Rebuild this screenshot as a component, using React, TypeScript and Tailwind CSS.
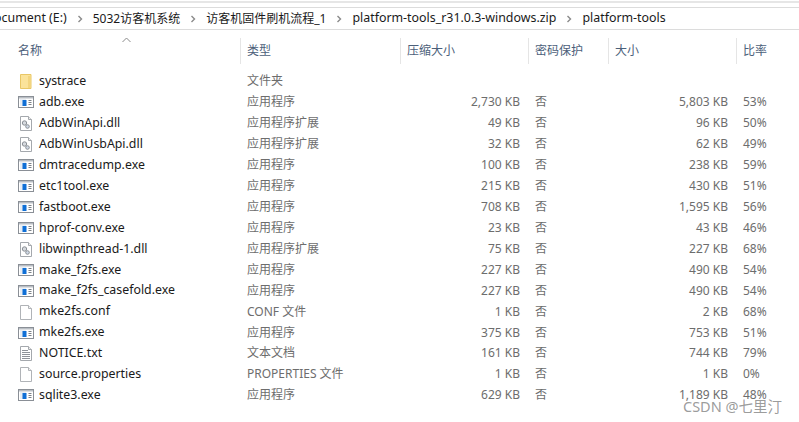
const rows: [string, string, string, string, string, string, string][] = [
  ["folder", "systrace", "文件夹", "", "", "", ""],
  ["exe", "adb.exe", "应用程序", "2,730 KB", "否", "5,803 KB", "53%"],
  ["dll", "AdbWinApi.dll", "应用程序扩展", "49 KB", "否", "96 KB", "50%"],
  ["dll", "AdbWinUsbApi.dll", "应用程序扩展", "32 KB", "否", "62 KB", "49%"],
  ["exe", "dmtracedump.exe", "应用程序", "100 KB", "否", "238 KB", "59%"],
  ["exe", "etc1tool.exe", "应用程序", "215 KB", "否", "430 KB", "51%"],
  ["exe", "fastboot.exe", "应用程序", "708 KB", "否", "1,595 KB", "56%"],
  ["exe", "hprof-conv.exe", "应用程序", "23 KB", "否", "43 KB", "46%"],
  ["dll", "libwinpthread-1.dll", "应用程序扩展", "75 KB", "否", "227 KB", "68%"],
  ["exe", "make_f2fs.exe", "应用程序", "227 KB", "否", "490 KB", "54%"],
  ["exe", "make_f2fs_casefold.exe", "应用程序", "227 KB", "否", "490 KB", "54%"],
  ["file", "mke2fs.conf", "CONF 文件", "1 KB", "否", "2 KB", "68%"],
  ["exe", "mke2fs.exe", "应用程序", "375 KB", "否", "753 KB", "51%"],
  ["txt", "NOTICE.txt", "文本文档", "161 KB", "否", "744 KB", "79%"],
  ["file", "source.properties", "PROPERTIES 文件", "1 KB", "否", "1 KB", "0%"],
  ["exe", "sqlite3.exe", "应用程序", "629 KB", "否", "1,189 KB", "48%"],
];

function Icon({ kind }: { kind: string }) {
  if (kind === "folder")
    return (
      <svg width="16" height="16" viewBox="0 0 16 16">
        <path d="M2.5 1.5h10.5v14H2.5z" fill="#fbe39a" stroke="#e9c766" />
        <path d="M11 3v12" stroke="#f3d57f" strokeWidth="2" />
      </svg>
    );
  if (kind === "exe")
    return (
      <svg width="16" height="16" viewBox="0 0 16 16">
        <rect x="0.5" y="2.5" width="15" height="11" fill="#fff" stroke="#8a8f96" />
        <rect x="1" y="3" width="14" height="1.5" fill="#b9bec4" />
        <rect x="2" y="5" width="6" height="7" fill="#e8eef5" />
        <rect x="4.5" y="6" width="4" height="6" fill="#0f6fd6" />
        <path d="M10.5 6.5h3M10.5 8.5h3M10.5 10.5h3" stroke="#7b8087" />
      </svg>
    );
  if (kind === "dll")
    return (
      <svg width="16" height="16" viewBox="0 0 16 16">
        <path d="M2.5 1.5h8l3 3v11h-11z" fill="#fff" stroke="#a4a8ad" />
        <path d="M10.5 1.5v3h3" fill="#eee" stroke="#a4a8ad" />
        <circle cx="6.5" cy="8" r="2.2" fill="#d5d9de" stroke="#8b9096" />
        <circle cx="9.5" cy="11.5" r="1.8" fill="#cfd9e6" stroke="#8b9096" />
      </svg>
    );
  if (kind === "txt")
    return (
      <svg width="16" height="16" viewBox="0 0 16 16">
        <path d="M2.5 1.5h8l3 3v11h-11z" fill="#fff" stroke="#a4a8ad" />
        <path d="M10.5 1.5v3h3" fill="#eee" stroke="#a4a8ad" />
        <path d="M4 5.5h6M4 7.5h8M4 9.5h8M4 11.5h8M4 13.5h8" stroke="#8f9399" />
      </svg>
    );
  return (
    <svg width="16" height="16" viewBox="0 0 16 16">
      <path d="M2.5 1.5h8l3 3v11h-11z" fill="#fff" stroke="#b0b3b7" />
      <path d="M10.5 1.5v3h3" fill="#f2f2f2" stroke="#b0b3b7" />
    </svg>
  );
}

function Chevron() {
  return (
    <svg width="6" height="8" viewBox="0 0 6 8" className="shrink-0">
      <path d="M1.5 1l3 3-3 3" fill="none" stroke="#8a8a8a" strokeWidth="1.4" />
    </svg>
  );
}

const grid = "grid grid-cols-[240px_160px_128px_80px_128px_63px]";

function Head({ label }: { label: string }) {
  return (
    <div className="h-[26px] border-l border-[#e5e5e5] pl-[6px] flex items-center">{label}</div>
  );
}

export default function App() {
  return (
    <div
      className="relative w-[799px] h-[422px] bg-white overflow-hidden text-[12px]"
      style={{ fontFamily: '"Noto Sans", "Noto Sans CJK SC", sans-serif' }}
    >
      <div className="h-[2px] mt-px bg-[#e6e6e6]" />
      <div className="mt-[4px] h-[23px] border-y border-[#dcdcdc] flex items-center gap-[10px] -ml-[15px] text-[#1a1a1a] whitespace-nowrap text-[12.4px]">
        <span>Document (E:)</span>
        <Chevron />
        <span className="text-[12px]">5032访客机系统</span>
        <Chevron />
        <span className="text-[12px]">访客机固件刷机流程_1</span>
        <Chevron />
        <span>platform-tools_r31.0.3-windows.zip</span>
        <Chevron />
        <span>platform-tools</span>
      </div>
      <div className={`${grid} relative mt-[8px] text-[#4c607a] text-[12px]`}>
        <div className="h-[26px] pl-[18px] flex items-center">名称</div>
        <Head label="类型" />
        <Head label="压缩大小" />
        <Head label="密码保护" />
        <Head label="大小" />
        <Head label="比率" />
        <svg width="9" height="6" viewBox="0 0 9 6" className="absolute left-[122px] -top-px">
          <path d="M0.5 5l4-4 4 4" fill="none" stroke="#8a8a8a" />
        </svg>
      </div>
      <div className="mt-[7px]">
        {rows.map((r) => (
          <div key={r[1]} className={`${grid} h-[20.93px] items-center whitespace-nowrap text-[#6d6d6d]`}>
            <div className="flex items-center gap-[5px] pl-[18px] text-[#1a1a1a] text-[12.35px]">
              <Icon kind={r[0]} />
              <span>{r[1]}</span>
            </div>
            <div className="pl-[7px]">{r[2]}</div>
            <div className="text-right pr-[8px]">{r[3]}</div>
            <div className="pl-[7px]">{r[4]}</div>
            <div className="text-right pr-[8px]">{r[5]}</div>
            <div className="pl-[7px]">{r[6]}</div>
          </div>
        ))}
      </div>
      <div className="absolute left-[683px] top-[396px] text-[14.5px] text-[#8a8a8a]/85 whitespace-nowrap">
        CSDN @七里汀
      </div>
    </div>
  );
}
